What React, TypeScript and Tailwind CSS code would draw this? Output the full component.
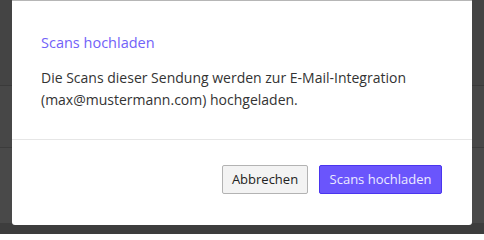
export default function App() {
  return (
    <div className="relative w-[484px] h-[234px] overflow-hidden bg-[#3d3d3d] font-['Open_Sans',sans-serif]">
      {/* page rows behind the overlay */}
      <div className="flex flex-col">
        <div className="h-[86px] bg-[#444444] border-b border-[#3a3a3a]" />
        <div className="h-[62px] bg-[#474747] border-b border-[#3c3c3c]" />
        <div className="h-[75px] bg-[#494949]" />
      </div>

      {/* modal */}
      <div className="absolute left-[12px] top-0 w-[460px] h-[225px] bg-white rounded-b-[3px] flex flex-col">
        <div className="h-px bg-[#b6b6b6]" />
        <div className="px-[29px] pt-[31px] h-[138px]">
          <h2 className="text-[14.5px] leading-[22px] text-[#7262f8]">Scans hochladen</h2>
          <p className="mt-[13px] text-[14px] leading-[22px] text-[#333333]">
            Die Scans dieser Sendung werden zur E-Mail-Integration (max@mustermann.com) hochgeladen.
          </p>
        </div>
        <div className="h-px bg-[#e6e6e6]" />
        <div className="flex justify-end gap-[11px] px-[30px] pt-[25px]">
          <button className="h-[29px] w-[86px] rounded-[2px] border border-[#b3b3b3] bg-[#f3f3f3] text-[13px] text-[#222222]">
            Abbrechen
          </button>
          <button className="h-[29px] w-[123px] rounded-[2px] border border-[#4a35ee] bg-[#6a55fc] text-[13px] text-[#ecebff]">
            Scans hochladen
          </button>
        </div>
      </div>
    </div>
  );
}
